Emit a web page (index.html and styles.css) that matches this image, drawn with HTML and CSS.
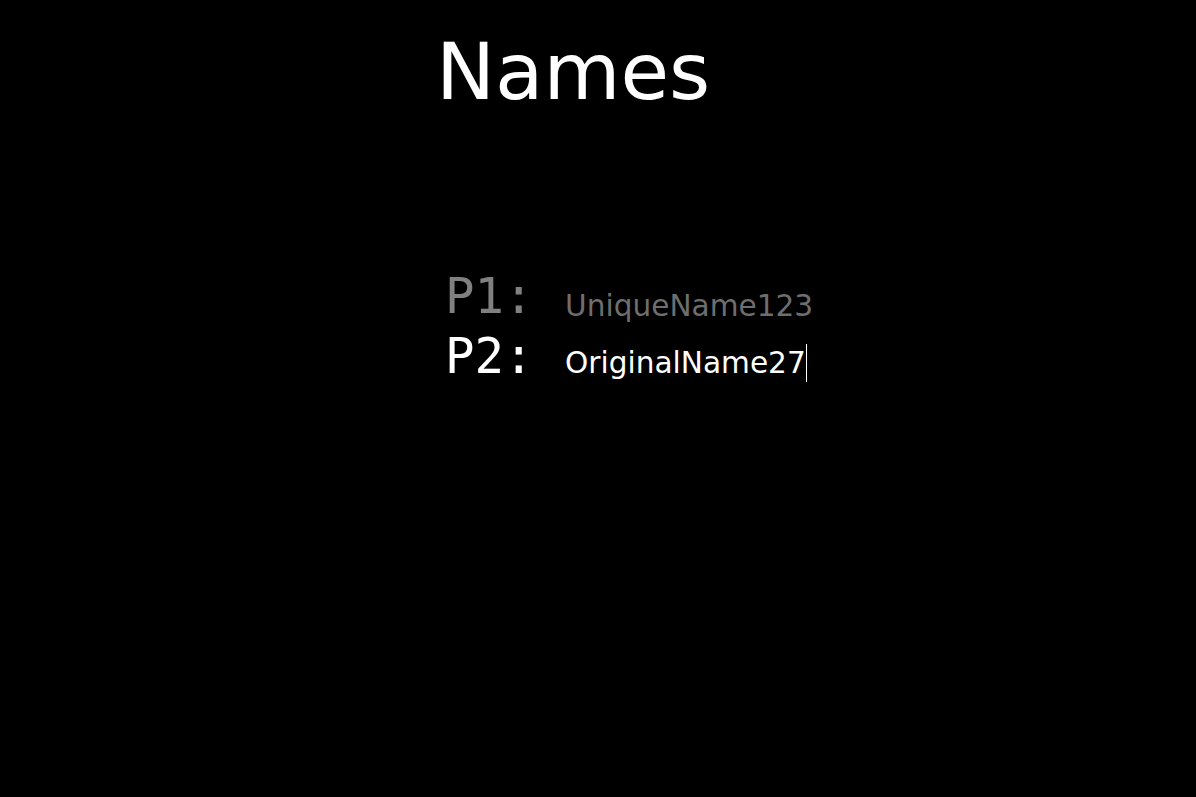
FILE: index.html
```html
<!DOCTYPE html>
<html>
<head>
<meta charset="utf-8">
<link rel="stylesheet" href="styles.css">
</head>
<body>
<main class="screen">
  <h1 class="title">Names</h1>
  <div class="players">
    <div class="labels">
      <div class="label inactive">P1:</div>
      <div class="label active">P2:</div>
    </div>
    <div class="names">
      <div class="name inactive">UniqueName123</div>
      <div class="name active">OriginalName27<span class="caret"></span></div>
    </div>
  </div>
</main>
</body>
</html>
```
FILE: styles.css
```css
html, body {
  margin: 0;
  padding: 0;
  background: #000;
  height: 100%;
}
.screen {
  display: flex;
  flex-direction: column;
  padding-left: 436px;
  font-family: "DejaVu Sans", Verdana, sans-serif;
  color: #fff;
}
.title {
  margin: 0;
  font-weight: normal;
  font-size: 79px;
  line-height: 1;
  padding-top: 33px;
}
.players {
  display: flex;
  align-items: flex-start;
  margin-top: 155px;
  padding-left: 9px;
}
.labels {
  display: flex;
  flex-direction: column;
  width: 120px;
  font-family: "DejaVu Sans Mono", monospace;
  font-size: 49px;
  line-height: 60px;
}
.names {
  display: flex;
  flex-direction: column;
  padding-top: 11px;
  font-size: 29.6px;
  line-height: 57px;
}
.label.inactive { color: #808080; }
.name.inactive { color: #6e6e6e; }
.active { color: #fff; }
.caret {
  display: inline-block;
  width: 1px;
  height: 38px;
  background: #fff;
  vertical-align: -9px;
  margin-left: 0;
}
```
